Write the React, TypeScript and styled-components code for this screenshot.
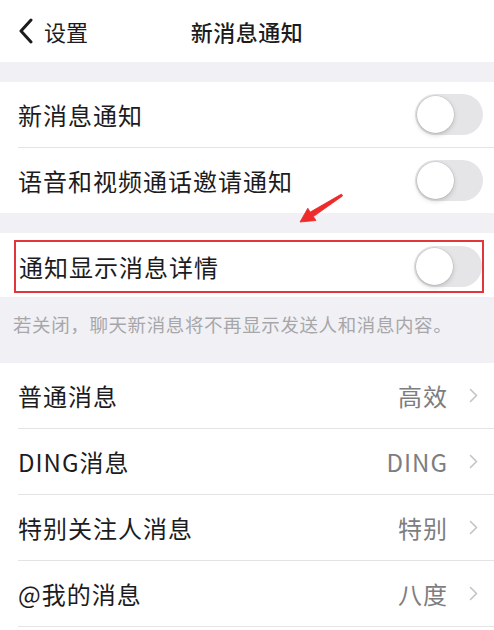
import React from "react";
import styled, { createGlobalStyle } from "styled-components";

const GlobalStyle = createGlobalStyle`
  html, body {
    margin: 0;
    padding: 0;
    background: #ffffff;
  }
  body {
    font-family: "Noto Sans CJK SC", "Noto Sans", "Liberation Sans", sans-serif;
    color: #1c1c1e;
    -webkit-font-smoothing: antialiased;
  }
  * { box-sizing: border-box; }
`;

const Screen = styled.div`
  position: relative;
  width: 494px;
  min-height: 630px;
  background: #ffffff;
  overflow: hidden;
`;

const NavBar = styled.header`
  height: 62px;
  display: grid;
  grid-template-columns: 1fr auto 1fr;
  align-items: center;
  padding: 0 16px;
  background: #ffffff;
`;

const BackButton = styled.div`
  display: flex;
  align-items: center;
  gap: 10px;
  font-size: 22px;
  color: #1c1c1e;
  padding-left: 2px;
`;

const NavTitle = styled.h1`
  margin: 0;
  font-size: 22px;
  font-weight: 500;
  color: #1c1c1e;
  letter-spacing: 0.5px;
`;

const GroupGap = styled.div`
  height: 20px;
  background: #f1f1f5;
`;

const Group = styled.section`
  background: #ffffff;
`;

const Row = styled.div`
  display: flex;
  padding-left: 18px;
`;

const RowInner = styled.div<{ $divider?: boolean; $trail?: "toggle" | "link" }>`
  flex: 1;
  height: ${(p) => (p.$divider ? 66 : 65)}px;
  display: flex;
  align-items: center;
  justify-content: space-between;
  padding-right: ${(p) => (p.$trail === "link" ? 16 : 11)}px;
  border-bottom: ${(p) => (p.$divider ? "1px solid #e4e4e6" : "none")};
`;

const HighlightRow = styled.div`
  height: 64px;
  display: flex;
  padding: 7px 10px 4px 14px;
`;

const HighlightBox = styled.div`
  flex: 1;
  display: flex;
  align-items: center;
  justify-content: space-between;
  border: 2px solid #e0373b;
  padding: 0 0 0 3px;
`;

const Label = styled.span`
  font-size: 24px;
  letter-spacing: 1px;
  color: #1c1c1e;
`;

const Trail = styled.span`
  display: flex;
  align-items: center;
  gap: 21px;
`;

const Value = styled.span`
  font-size: 24px;
  letter-spacing: 1px;
  color: #7d7d7f;
`;

const Track = styled.span`
  position: relative;
  display: inline-block;
  width: 68px;
  height: 41px;
  border-radius: 21px;
  background: #e5e5e8;
`;

const Knob = styled.span`
  position: absolute;
  left: 2px;
  top: 2px;
  width: 37px;
  height: 37px;
  border-radius: 50%;
  background: #ffffff;
  box-shadow: 0 0 0 0.5px rgba(0, 0, 0, 0.12), 0 2px 5px rgba(0, 0, 0, 0.18);
`;

const FooterNote = styled.div`
  background: #f1f1f5;
  height: 66px;
  padding: 14px 0 0 13px;
  font-size: 18.5px;
  letter-spacing: 0.6px;
  color: #a7a7aa;
`;

const Pointer = styled.svg`
  position: absolute;
  left: 296px;
  top: 190px;
  pointer-events: none;
`;

const Toggle = () => (
  <Track>
    <Knob />
  </Track>
);

const Chevron = () => (
  <svg width="9" height="15" viewBox="0 0 9 15" fill="none">
    <path d="M1.5 1.5 L7.5 7.5 L1.5 13.5" stroke="#c4c4c8" strokeWidth="1.6" strokeLinecap="round" strokeLinejoin="round" />
  </svg>
);

const BackIcon = () => (
  <svg width="16" height="26" viewBox="0 0 16 26" fill="none">
    <path d="M13 2 L3 13 L13 24" stroke="#1c1c1e" strokeWidth="3" strokeLinecap="round" strokeLinejoin="round" />
  </svg>
);

type LinkItem = { label: string; value: string };

const links: LinkItem[] = [
  { label: "普通消息", value: "高效" },
  { label: "DING消息", value: "DING" },
  { label: "特别关注人消息", value: "特别" },
  { label: "@我的消息", value: "八度" },
];

export default function App() {
  return (
    <>
      <GlobalStyle />
      <Screen>
        <NavBar>
          <BackButton>
            <BackIcon />
            <span>设置</span>
          </BackButton>
          <NavTitle>新消息通知</NavTitle>
          <span />
        </NavBar>

        <GroupGap />
        <Group>
          <Row>
            <RowInner $divider $trail="toggle">
              <Label>新消息通知</Label>
              <Toggle />
            </RowInner>
          </Row>
          <Row>
            <RowInner $trail="toggle">
              <Label>语音和视频通话邀请通知</Label>
              <Toggle />
            </RowInner>
          </Row>
        </Group>

        <GroupGap />
        <Group>
          <HighlightRow>
            <HighlightBox>
              <Label>通知显示消息详情</Label>
              <Toggle />
            </HighlightBox>
          </HighlightRow>
        </Group>
        <FooterNote>若关闭，聊天新消息将不再显示发送人和消息内容。</FooterNote>

        <Group>
          {links.map((item) => (
            <Row key={item.label}>
              <RowInner $divider $trail="link">
                <Label>{item.label}</Label>
                <Trail>
                  <Value>{item.value}</Value>
                  <Chevron />
                </Trail>
              </RowInner>
            </Row>
          ))}
        </Group>

        {/* tapered red annotation arrow pointing at the highlighted row */}
        <Pointer width="52" height="36" viewBox="0 0 52 36">
          <polygon
            points="4,32 20,30.5 17.4,26.6 46.6,5.9 45.4,4.1 14.2,22.1 11.8,18.2"
            fill="#ee2a2a"
            stroke="#ee2a2a"
            strokeWidth="0.8"
            strokeLinejoin="round"
          />
        </Pointer>
      </Screen>
    </>
  );
}
